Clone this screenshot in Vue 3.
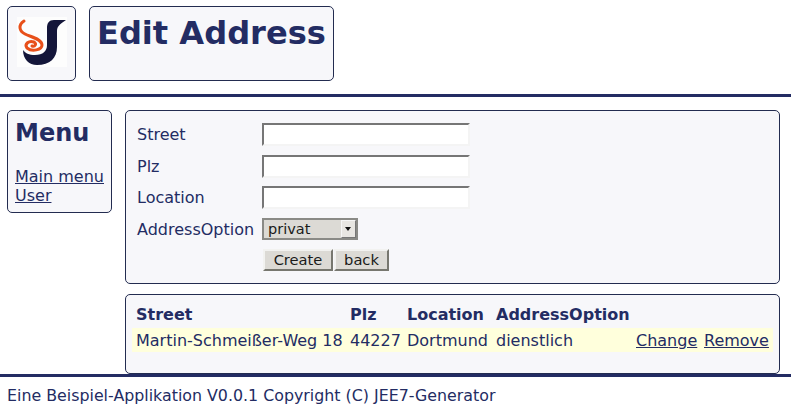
<template>
  <div class="page">
    <header class="top">
      <div class="box logo">
        <svg width="50" height="50" viewBox="0 0 50 50">
          <rect width="50" height="50" fill="#fdfdfd" />
          <path d="M49 3 L37 3 C32 3 30 6 30 11 L30 28 C30 34 26 38 18 38 C12 38 8 36 6 33 C6 42 12 48 20 48 C33 48 40 41 40 30 L40 14 C40 9 43 7 49 3 Z" fill="#14163a" />
          <path d="M7 4 C1 8 2 14 8 17 C14 20 25 22 25 28 C25 33 15 35 10 31 C7 27 12 23 17 25 C20 27 18 30 15 29" fill="none" stroke="#e8501a" stroke-width="3" stroke-linecap="round" />
        </svg>
      </div>
      <div class="box title">
        <h1>Edit Address</h1>
      </div>
    </header>
    <hr class="rule rule-top">

    <div class="content">
      <nav class="box menu">
        <h2>Menu</h2>
        <a href="#">Main menu</a>
        <a href="#">User</a>
      </nav>

      <main class="main">
        <form class="box form" @submit.prevent>
          <label>Street</label>
          <input v-model="street" type="text">
          <label>Plz</label>
          <input v-model="plz" type="text">
          <label>Location</label>
          <input v-model="location" type="text">
          <label>AddressOption</label>
          <div class="select">
            <span class="select-value">{{ option }}</span>
            <span class="select-arrow"></span>
          </div>
          <div class="buttons">
            <button type="submit">Create</button>
            <button type="button" class="back">back</button>
          </div>
        </form>

        <div class="box list">
          <table>
            <thead>
              <tr>
                <th>Street</th>
                <th>Plz</th>
                <th>Location</th>
                <th>AddressOption</th>
                <th></th>
                <th></th>
              </tr>
            </thead>
            <tbody>
              <tr v-for="row in rows" :key="row.street">
                <td>{{ row.street }}</td>
                <td>{{ row.plz }}</td>
                <td>{{ row.location }}</td>
                <td>{{ row.option }}</td>
                <td><a href="#">Change</a></td>
                <td><a href="#">Remove</a></td>
              </tr>
            </tbody>
          </table>
        </div>
      </main>
    </div>

    <hr class="rule">
    <footer class="foot">Eine Beispiel-Applikation V0.0.1 Copyright (C) JEE7-Generator</footer>
  </div>
</template>

<script setup>
import { ref } from 'vue'

const street = ref('')
const plz = ref('')
const location = ref('')
const option = ref('privat')

const rows = ref([
  { street: 'Martin-Schmeißer-Weg 18', plz: '44227', location: 'Dortmund', option: 'dienstlich' }
])
</script>

<style>
html, body {
  background: #fff;
}
</style>

<style scoped>
.page {
  font-family: "DejaVu Sans", sans-serif;
  font-size: 16px;
  line-height: 19px;
  color: #232c63;
}
.box {
  box-sizing: border-box;
  background: #f7f7fa;
  border: 1px solid #232c50;
  border-radius: 5px;
}
.top {
  display: flex;
  gap: 13px;
  padding: 6px 7px 0;
}
.logo {
  width: 69px;
  height: 75px;
  padding: 10px 0 0 9px;
}
.logo svg {
  display: block;
}
.title {
  width: 245px;
  height: 75px;
  padding: 8px 7px 0;
}
h1 {
  margin: 0;
  font-size: 32.1px;
  line-height: 37px;
  font-weight: bold;
}
.rule {
  height: 3px;
  margin: 0;
  border: 0;
  background: #232c63;
}
.rule-top {
  margin-top: 13px;
}
.content {
  display: flex;
  align-items: flex-start;
  gap: 13px;
  padding: 13px 11px 0 7px;
}
.menu {
  width: 105px;
  height: 103px;
  padding: 8px 7px 0;
}
.menu a {
  display: block;
}
h2 {
  margin: 0 0 20px;
  font-size: 24px;
  line-height: 28px;
  font-weight: bold;
}
a {
  color: #232c63;
  text-decoration: underline;
}
.main {
  flex: 1;
  min-width: 0;
}
.form {
  height: 174px;
  padding: 12px 11px 0;
  display: grid;
  grid-template-columns: 125px 208px;
  grid-auto-rows: 23px;
  row-gap: 8.5px;
  align-items: center;
}
.form label {
  white-space: nowrap;
}
.form input {
  box-sizing: border-box;
  width: 208px;
  height: 23px;
  padding: 0 3px;
  background: #fff;
  border: 2px solid;
  border-color: #767676 #f4f4f4 #f4f4f4 #767676;
  outline: none;
  font: inherit;
}
.select {
  box-sizing: border-box;
  align-self: start;
  display: flex;
  align-items: center;
  justify-content: space-between;
  width: 96px;
  height: 22px;
  padding: 0 0 0 4px;
  background: #dcdad5;
  border: 2px solid #8a8a86;
  color: #1a1a1a;
  font-size: 14.5px;
}
.select-value {
  margin-top: 1px;
}
.select-arrow {
  position: relative;
  box-sizing: border-box;
  width: 15px;
  height: 18px;
  background: #e8e6e2;
  border: 1px solid;
  border-color: #f6f6f6 #777 #777 #f6f6f6;
}
.select-arrow::after {
  content: "";
  position: absolute;
  left: 3px;
  top: 6px;
  border-left: 3px solid transparent;
  border-right: 3px solid transparent;
  border-top: 4px solid #111;
}
.buttons {
  grid-column: 2;
  align-self: start;
  display: flex;
  gap: 1px;
  margin-left: 1px;
}
button {
  box-sizing: border-box;
  width: 70px;
  height: 22px;
  padding: 0 0 1px;
  background: #dcdad5;
  border: 2px solid;
  border-color: #f2f2f0 #77776f #77776f #f2f2f0;
  color: #1a1a1a;
  font-family: inherit;
  font-size: 14.67px;
}
button.back {
  width: 55px;
}
.list {
  height: 80px;
  margin-top: 10px;
  padding: 9px 6px 0;
}
table {
  width: 100%;
  table-layout: fixed;
  border-collapse: separate;
  border-spacing: 0;
}
th,
td {
  box-sizing: border-box;
  padding: 1px 0 4px 4px;
  height: 24px;
  text-align: left;
  white-space: nowrap;
}
th {
  font-weight: bold;
}
td {
  padding: 3px 0 2px 4px;
  background: #ffffdc;
}
th:nth-child(1) {
  width: 214px;
}
th:nth-child(2) {
  width: 57px;
}
th:nth-child(3) {
  width: 89px;
}
th:nth-child(4) {
  width: 140px;
}
th:nth-child(5) {
  width: 68px;
}
.foot {
  padding: 9px 7px 0;
  font-size: 15.84px;
}
</style>
